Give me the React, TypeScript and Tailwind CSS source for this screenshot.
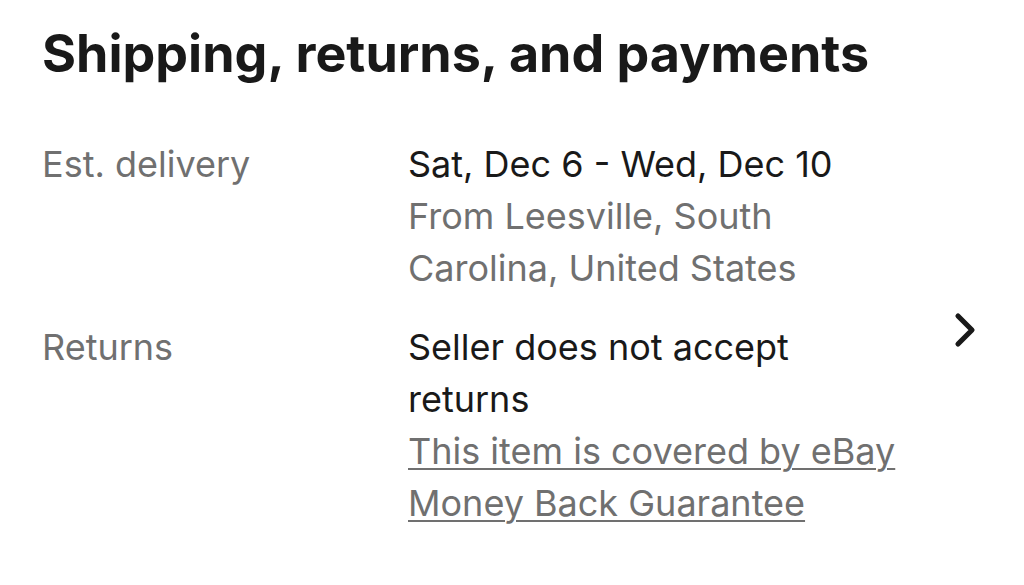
import { ChevronRight } from "lucide-react";

const rows = [
  {
    label: "Est. delivery",
    lines: [
      { text: "Sat, Dec 6 - Wed, Dec 10", tone: "main" },
      { text: "From Leesville, South Carolina, United States", tone: "muted" },
    ],
    chevron: false,
  },
  {
    label: "Returns",
    lines: [
      { text: "Seller does not accept returns", tone: "main" },
      { text: "This item is covered by eBay Money Back Guarantee", tone: "link" },
    ],
    chevron: true,
  },
];

export default function App() {
  return (
    <div className="min-h-[585px] bg-white pl-[42px] pr-[31px] pt-[22px] font-['Inter',sans-serif] text-[#191919]">
      <h1 className="text-[52px] font-bold leading-[64px]">
        Shipping, returns, and payments
      </h1>

      <div className="mt-[52px] flex flex-col gap-[27px]">
        {rows.map((row) => (
          <div key={row.label} className="flex items-start text-[36px] leading-[52px]">
            <div className="w-[366px] shrink-0 text-[#707070]">{row.label}</div>
            <div className="w-[498px] shrink-0">
              {row.lines.map((line) => (
                <div
                  key={line.text}
                  className={
                    line.tone === "main"
                      ? "text-[#191919]"
                      : line.tone === "muted"
                        ? "text-[#707070]"
                        : "text-[#707070] underline decoration-2 underline-offset-[4px]"
                  }
                >
                  {line.text}
                </div>
              ))}
            </div>
            <div className="ml-auto">
              {row.chevron && (
                <ChevronRight className="-mt-[19px] h-[56px] w-[56px]" strokeWidth={2.2} />
              )}
            </div>
          </div>
        ))}
      </div>
    </div>
  );
}
